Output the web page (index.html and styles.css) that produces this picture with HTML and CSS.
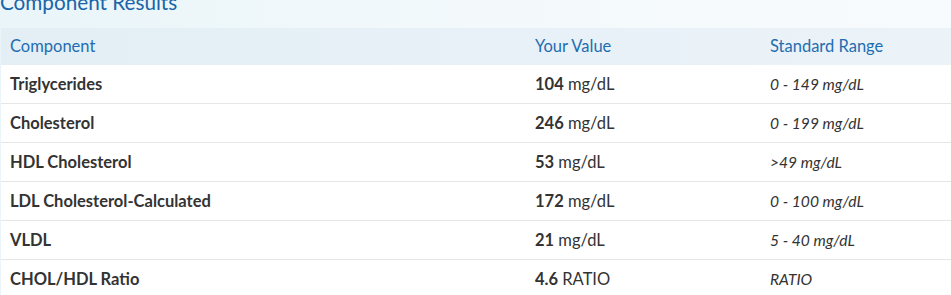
FILE: index.html
```html
<!DOCTYPE html>
<html>
<head>
<meta charset="utf-8">
<link rel="stylesheet" href="styles.css">
</head>
<body>
<section class="panel">
  <h2 class="title">Component Results</h2>
  <table class="results">
    <colgroup>
      <col class="col-name">
      <col class="col-val">
      <col class="col-range">
    </colgroup>
    <thead>
      <tr>
        <th>Component</th>
        <th>Your Value</th>
        <th>Standard Range</th>
      </tr>
    </thead>
    <tbody>
      <tr><td class="name">Triglycerides</td><td class="val"><b>104</b> mg/dL</td><td class="range">0 - 149 mg/dL</td></tr>
      <tr><td class="name">Cholesterol</td><td class="val"><b>246</b> mg/dL</td><td class="range">0 - 199 mg/dL</td></tr>
      <tr><td class="name">HDL Cholesterol</td><td class="val"><b>53</b> mg/dL</td><td class="range">&gt;49 mg/dL</td></tr>
      <tr><td class="name">LDL Cholesterol-Calculated</td><td class="val"><b>172</b> mg/dL</td><td class="range">0 - 100 mg/dL</td></tr>
      <tr><td class="name">VLDL</td><td class="val"><b>21</b> mg/dL</td><td class="range">5 - 40 mg/dL</td></tr>
      <tr><td class="name">CHOL/HDL Ratio</td><td class="val"><b>4.6</b> RATIO</td><td class="range">RATIO</td></tr>
    </tbody>
  </table>
</section>
</body>
</html>
```
FILE: styles.css
```css
html, body {
  margin: 0;
  padding: 0;
  background: #ffffff;
}
body {
  font-family: Lato, "Liberation Sans", sans-serif;
  color: #333333;
  overflow: hidden;
}
.panel {
  background: linear-gradient(90deg, #e9f5f9 0%, #f3f9fb 50%, #f8fbfd 100%);
  padding-top: 28px;
  position: relative;
  height: 295px;
  box-sizing: border-box;
  overflow: hidden;
}
.title {
  position: absolute;
  left: 0;
  top: -10px;
  margin: 0;
  font-size: 20.7px;
  font-weight: 400;
  color: #1a64a8;
  line-height: 24px;
  white-space: nowrap;
}
.results {
  width: 950px;
  margin-left: 1px;
  border-collapse: collapse;
  table-layout: fixed;
  background: #ffffff;
}
.col-name { width: 525px; }
.col-val { width: 235px; }
.results thead tr {
  background: linear-gradient(90deg, #e3eef5 0%, #e8f1f7 60%, #ebf3f9 100%);
}
.results th {
  height: 37px;
  padding: 0 0 1px 9px;
  text-align: left;
  font-weight: 400;
  font-size: 16.5px;
  color: #1f6db0;
  box-sizing: border-box;
}
.results td {
  height: 38px;
  padding: 0 0 0 9px;
  border-bottom: 1px solid #e6e6e6;
  white-space: nowrap;
}
.name {
  font-weight: 700;
  font-size: 16.5px;
  color: #333;
}
.val {
  font-size: 16.5px;
  color: #333;
}
.val b { font-weight: 700; }
.range {
  font-style: italic;
  font-size: 15.6px;
  color: #333;
}
```
